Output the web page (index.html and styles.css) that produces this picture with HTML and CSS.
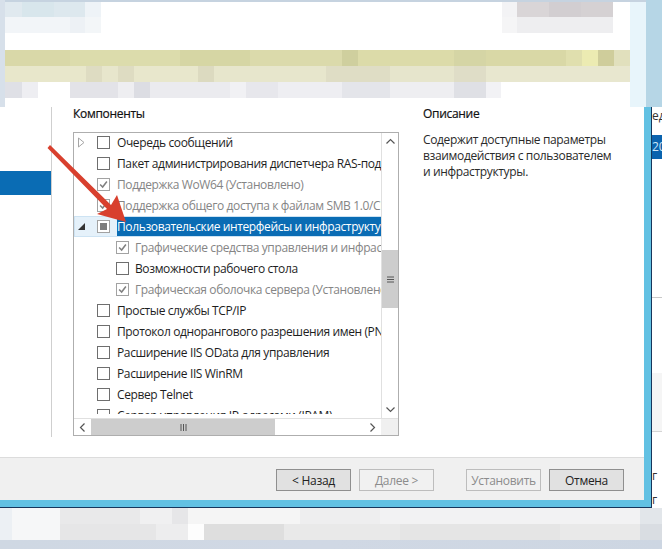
FILE: index.html
```html
<!DOCTYPE html>
<html lang="ru">
<head>
<meta charset="utf-8">
<title>Компоненты</title>
<link rel="stylesheet" href="styles.css">
</head>
<body>
<div class="page">
  <div class="top">
    <div class="mosaic-top"></div>
  </div>
  <div class="middle">
    <div class="window">
      <div class="window-main">
        <aside class="sidebar"><div class="side-selected"></div></aside>
        <section class="components">
          <h2 class="heading">Компоненты</h2>
          <div class="listbox">
            <div class="list-area">
              <div class="rows">
                <div class="row"><svg class="expander" viewBox="0 0 9 11"><path d="M1.5 1 L7 5.5 L1.5 10 Z" fill="#fff" stroke="#a6a6a6"/></svg><span class="check"></span><span class="label">Очередь сообщений</span></div>
                <div class="row"><span class="check"></span><span class="label">Пакет администрирования диспетчера RAS-подключений</span></div>
                <div class="row"><span class="check dim"><svg viewBox="0 0 13 13"><path d="M2.5 6.5 L5.5 9.5 L10.5 3" fill="none" stroke="#808080" stroke-width="1.8"/></svg></span><span class="label off">Поддержка WoW64 (Установлено)</span></div>
                <div class="row"><span class="check dim"><svg viewBox="0 0 13 13"><path d="M2.5 6.5 L5.5 9.5 L10.5 3" fill="none" stroke="#808080" stroke-width="1.8"/></svg></span><span class="label off">Поддержка общего доступа к файлам SMB 1.0/CIFS</span></div>
                <div class="row focus"><svg class="expander" viewBox="0 0 9 11"><path d="M1 9 L8 9 L8 2 Z" fill="#333"/></svg><span class="check dim"><span class="mixed"></span></span><span class="label picked">Пользовательские интерфейсы и инфраструктура</span></div>
                <div class="row nested"><span class="check dim"><svg viewBox="0 0 13 13"><path d="M2.5 6.5 L5.5 9.5 L10.5 3" fill="none" stroke="#808080" stroke-width="1.8"/></svg></span><span class="label off">Графические средства управления и инфраструктура</span></div>
                <div class="row nested"><span class="check"></span><span class="label">Возможности рабочего стола</span></div>
                <div class="row nested"><span class="check dim"><svg viewBox="0 0 13 13"><path d="M2.5 6.5 L5.5 9.5 L10.5 3" fill="none" stroke="#808080" stroke-width="1.8"/></svg></span><span class="label off">Графическая оболочка сервера (Установлено)</span></div>
                <div class="row"><span class="check"></span><span class="label">Простые службы TCP/IP</span></div>
                <div class="row"><span class="check"></span><span class="label">Протокол однорангового разрешения имен (PNRP)</span></div>
                <div class="row"><span class="check"></span><span class="label">Расширение IIS OData для управления</span></div>
                <div class="row"><span class="check"></span><span class="label">Расширение IIS WinRM</span></div>
                <div class="row"><span class="check"></span><span class="label">Сервер Telnet</span></div>
                <div class="row"><span class="check"></span><span class="label">Сервер управления IP-адресами (IPAM)</span></div>
              </div>
              <div class="vscroll">
                <div class="sb-btn"><svg viewBox="0 0 17 17"><path d="M4.5 10.5 L8.5 6.5 L12.5 10.5" fill="none" stroke="#555" stroke-width="1.2"/></svg></div>
                <div class="v-track">
                  <div class="v-thumb"><svg viewBox="0 0 9 9" class="grip"><path d="M1 2 H8 M1 4.5 H8 M1 7 H8" stroke="#555" stroke-width="1"/></svg></div>
                </div>
                <div class="sb-btn"><svg viewBox="0 0 17 17"><path d="M4.5 6.5 L8.5 10.5 L12.5 6.5" fill="none" stroke="#555" stroke-width="1.2"/></svg></div>
              </div>
            </div>
            <div class="hscroll">
              <div class="sb-btn"><svg viewBox="0 0 17 17"><path d="M10.5 4.5 L6.5 8.5 L10.5 12.5" fill="none" stroke="#555" stroke-width="1.2"/></svg></div>
              <div class="h-track">
                <div class="h-thumb"><svg viewBox="0 0 9 9" class="grip"><path d="M2 1 V8 M4.5 1 V8 M7 1 V8" stroke="#555" stroke-width="1"/></svg></div>
              </div>
              <div class="sb-btn"><svg viewBox="0 0 17 17"><path d="M6.5 4.5 L10.5 8.5 L6.5 12.5" fill="none" stroke="#555" stroke-width="1.2"/></svg></div>
              <div class="sb-corner"></div>
            </div>
          </div>
        </section>
        <section class="description">
          <h2 class="heading">Описание</h2>
          <p class="desc-text">Содержит доступные параметры<br>взаимодействия с пользователем<br>и инфраструктуры.</p>
        </section>
      </div>
      <footer class="footer">
        <button class="btn">&lt; Назад</button>
        <button class="btn disabled">Далее &gt;</button>
        <button class="btn disabled install">Установить</button>
        <button class="btn">Отмена</button>
      </footer>
    </div>
    <div class="behind">
      <div class="b-text">ед</div>
      <div class="b-selected">20</div>
      <div class="b-line"></div>
      <div class="b-shade"></div>
      <div class="b-r1">г</div>
      <div class="b-r2">г</div>
    </div>
  </div>
  <div class="mosaic-bottom"></div>
</div>
<svg class="arrow" viewBox="0 0 662 549" aria-hidden="true">
  <path d="M47.5 148 L50 145 L111 205 L117 195 L126 222 L97 214 L107 209 Z" fill="#d8402e"/>
</svg>
</body>
</html>
```
FILE: styles.css
```css
* { box-sizing: border-box; }
html, body { margin: 0; padding: 0; background: #fff; }
body { width: 662px; height: 549px; overflow: hidden; position: relative; font-family: "Open Sans", "Noto Sans", sans-serif; font-size: 12px; color: #222; }
.page { display: flex; flex-direction: column; height: 549px; }

.top { height: 107px; flex: none; background:
  linear-gradient(#c6d3e0, #c6d3e0) 0 0 / 646px 2px no-repeat,
  linear-gradient(90deg, #b6d6e6, #b6d6e6) 646px 0 / 16px 107px no-repeat,
  linear-gradient(90deg, #e8f5fb, #e8f5fb) 630px 0 / 16px 107px no-repeat,
  #fff; }
.mosaic-top { height: 107px; background:
  linear-gradient(#d7e0ea, #d7e0ea) 0 0 / 5px 107px no-repeat,
  linear-gradient(90deg, #e0e9ef 0 22px, #d8e6ec 22px 54px, #dde8ee 54px 85px, #eef3f7 85px 101px) 0 2px / 101px 15px no-repeat,
  linear-gradient(90deg, #f2f5f8 0 70px, #edf1f5 70px 85px, #f3f6f8 85px 101px) 0 17px / 101px 16px no-repeat,
  linear-gradient(90deg, #f3f3f5 0 15px, #d9d5d7 15px 47px, #d2ced1 47px 79px, #d5d1d3 79px 111px) 502px 2px / 111px 15px no-repeat,
  linear-gradient(90deg, #f5f5f6 0 15px, #eeeef0 15px 111px) 502px 17px / 111px 16px no-repeat,
  linear-gradient(90deg, #d9d8a8 0 70px, #dcdcac 70px 180px, #d6d6a4 180px 250px, #dbdaab 250px 342px, #cfcf9e 342px 358px, #dcdba9 358px 454px, #d5d5a5 454px 486px, #d9d8a6 486px 566px, #e0dfae 566px 582px, #ecebb2 582px 598px, #cfcd9b 598px 614px, #e1e0bd 614px 630px) 0 50px / 630px 16px no-repeat,
  linear-gradient(90deg, #e8e7cb 0 86px, #dedcc2 86px 102px, #e7e6cc 102px 118px, #dedcc2 118px 134px, #e8e7cc 134px 198px, #dcdac0 198px 214px, #e7e6cc 214px 326px, #dfddc5 326px 390px, #e6e5cc 390px 454px, #dfddc7 454px 486px, #e8e7cf 486px 630px) 0 66px / 630px 16px no-repeat,
  linear-gradient(90deg, #dfe0e6 0 22px, #eeeef2 22px 38px, #fff 38px 70px, #e3e3e8 70px 118px, #eeeef1 118px 134px, #dcdde3 134px 150px, #ebebef 150px 230px, #f1f1f4 230px 246px, #e7e7ec 246px 278px, #eeeef2 278px 342px, #e4e5ea 342px 390px, #eeeef1 390px 454px, #dfe0e5 454px 486px, #f2f2f5 486px 501px) 0 82px / 501px 16px no-repeat; }

.middle { height: 401px; flex: none; display: flex; }
.window { width: 652px; height: 401px; flex: none; display: flex; flex-direction: column; background: #fff; border-right: 1px solid #17365c; border-bottom: 1px solid #17365c; box-shadow: inset -7px -7px 0 #62c1e3; padding: 0 7px 7px 0; }
.window-main { height: 350px; flex: none; display: flex; }

.sidebar { width: 52px; flex: none; border-right: 1px solid #cfcfcf; height: 330px; padding-top: 64px; }
.side-selected { height: 24px; background: #0a6cb4; }

.components { width: 326px; margin-left: 21px; flex: none; }
.heading { margin: 0; height: 25px; line-height: 14px; font-size: 12px; font-weight: 400; letter-spacing: -0.3px; color: #111; -webkit-text-stroke: 0.2px #111; }

.listbox { width: 326px; height: 304px; border: 1px solid #aeaeae; display: flex; flex-direction: column; }
.list-area { height: 285px; flex: none; display: flex; align-items: flex-start; }
.rows { width: 307px; height: 281px; flex: none; overflow: hidden; }
.row { height: 21px; display: flex; align-items: center; position: relative; padding-left: 23px; white-space: nowrap; top: -1px; }
.row.nested { padding-left: 42px; }
.expander { position: absolute; left: 3px; top: 5px; width: 9px; height: 11px; }
.check { width: 13px; height: 13px; flex: none; border: 1px solid #6e6e6e; background: #fff; display: flex; align-items: center; justify-content: center; }
.check.dim { border-color: #a2a2a2; }
.check svg { width: 11px; height: 11px; display: block; }
.mixed { width: 7px; height: 7px; background: #7d7d7d; display: block; }
.label { margin-left: 7px; line-height: 20px; letter-spacing: -0.38px; color: #1e1e1e; }
.nested .label { margin-left: 6px; }
.label.off { color: #858585; }
.focus { background: #e5f1fa; box-shadow: inset 0 0 0 1px #cde3f3; }
.label.picked { background: #0a6cb4; color: #fff; flex: 1; height: 19px; line-height: 19px; overflow: hidden; }

.vscroll { width: 17px; height: 285px; flex: none; border-left: 1px solid #e0e0e0; display: flex; flex-direction: column; background: #fff; }
.sb-btn { width: 17px; height: 17px; flex: none; }
.sb-btn svg { width: 17px; height: 17px; display: block; }
.v-track { flex: 1; padding-top: 100px; }
.v-thumb { height: 58px; background: #cdcdcd; display: flex; align-items: center; justify-content: center; }
.grip { width: 9px; height: 9px; display: block; }

.hscroll { height: 17px; flex: none; display: flex; border-top: 1px solid #e0e0e0; }
.h-track { flex: 1; }
.h-thumb { width: 184px; height: 16px; background: #cdcdcd; display: flex; align-items: center; justify-content: center; }
.sb-corner { width: 17px; background: #f0f0f0; flex: none; }

.description { margin-left: 24px; width: 215px; flex: none; }
.desc-text { margin: 0; line-height: 16px; letter-spacing: -0.35px; color: #2a2a2a; }

.footer { height: 43px; flex: none; background: #f0f0f0; border-top: 1px solid #dcdcdc; display: flex; align-items: flex-start; justify-content: flex-end; gap: 8px; padding: 11px 20px 0 0; }
.btn { width: 75px; height: 22px; padding: 0; font: inherit; letter-spacing: -0.3px; background: #e1e1e1; border: 1px solid #8f8f8f; color: #222; }
.btn.disabled { background: #f1f1f1; border-color: #bdbdbd; color: #8c8c8c; }
.btn.install { margin-left: 24px; }

.behind { width: 10px; flex: none; height: 401px; overflow: hidden; font-size: 12px; line-height: 16px; color: #333; }
.b-text { height: 28px; padding-top: 1px; white-space: nowrap; }
.b-selected { height: 24px; background: #0a63ae; color: #cfe6f7; line-height: 24px; white-space: nowrap; }
.b-line { height: 139px; border-bottom: 1px solid #c9c9c9; }
.b-shade { height: 134px; padding: 0; border-top: 75px solid #fff; border-bottom: 1px solid #d5d5d5; background: #f5f5f5; }
.b-r1 { height: 24px; margin-top: 36px; line-height: 16px; }
.b-r2 { height: 16px; }

.mosaic-bottom { height: 41px; flex: none; background:
  linear-gradient(90deg, #ecf0f4 0 12px, #f6f7f8 12px 60px, #e9e9ea 60px 140px, #f0f0f1 140px 172px, #e6e6e8 172px 188px, #f5f5f5 188px 300px, #eeeeef 300px 380px, #f2f2f3 380px 640px, #e2e6ea 640px 662px) 0 0 / 662px 16px no-repeat,
  linear-gradient(90deg, #ecf0f4 0 12px, #f6f7f8 12px 60px, #e6e6e7 60px 156px, #ededee 156px 188px, #fdfdfd 188px 204px, #dedede 204px 284px, #e9e9e9 284px 400px, #e5e5e5 400px 560px, #e9e9e9 560px 640px, #d9dde2 640px 662px) 0 16px / 662px 16px no-repeat,
  linear-gradient(90deg, #cfd8e3, #d0d8e4 50%, #cdd6e2) 0 32px / 662px 9px no-repeat,
  #f4f4f4; }

.arrow { position: absolute; left: 0; top: 0; width: 662px; height: 549px; pointer-events: none; }
```
